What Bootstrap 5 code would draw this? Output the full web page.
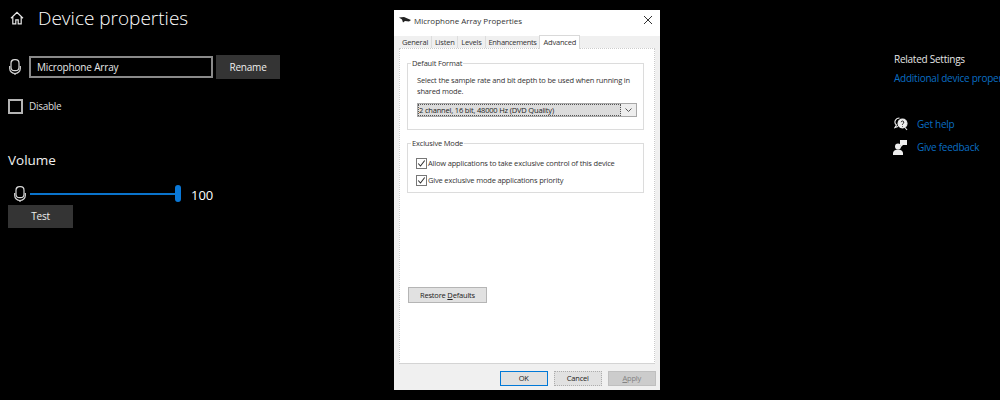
<!DOCTYPE html>
<html lang="en"><head><meta charset="utf-8"><title>Device properties</title>
<link href="https://cdn.jsdelivr.net/npm/bootstrap@5.3.0/dist/css/bootstrap.min.css" rel="stylesheet">
<style>
html,body{height:400px;overflow:hidden}
body{background:#000;color:#fff;font-family:"Open Sans","Noto Sans",sans-serif;font-size:10px;width:1000px}
.pane-left{width:394px;height:400px;flex:none;padding-left:8px}
.pane-right{width:340px;flex:none;padding:52px 0 0 234px;white-space:nowrap;overflow:hidden;height:400px}
.title-row{height:34px;padding-top:2px;gap:14px;padding-left:2px}
.title-row h1{font-size:19px;font-weight:300;line-height:28px;margin:0}
.name-row{margin-top:21px;height:24px;gap:3px;padding-left:1px}
.name-input{width:184px;height:22px;margin-left:5px;border:2px solid #8a8a8a;background:#000;color:#e8e8e8;font-size:10px;letter-spacing:-.17px;padding:0 6px;line-height:18px;border-radius:0}
.dark-btn{background:#343434;color:#eee;font-size:10px;letter-spacing:-.2px;border:0;border-radius:0;padding:0;display:flex;align-items:center;justify-content:center}
.rename{width:64px;height:24px}
.dis-row{margin-top:20px;height:15px;gap:6px;font-size:10px;letter-spacing:-.3px;color:#ddd}
.box{width:15px;height:15px;border:2px solid #b4b4b4;flex:none}
.vol-h{font-size:13.5px;font-weight:400;margin:36px 0 0;line-height:20px;color:#f0f0f0}
.vol-row{margin-top:15px;height:17px;padding-left:6px;position:relative}
.track{width:147px;height:2px;background:#0a74cc;margin-left:4px;position:relative}
.thumb{position:absolute;right:-4px;top:-8px;width:6px;height:17px;border-radius:3px;background:#0a78d7}
.vol-num{font-size:13px;margin-left:14px;margin-top:4px;line-height:17px}
.test{width:65px;height:23px;margin-top:3px}
.dlg{width:266px;height:380px;flex:none;margin-top:10px;background:#f0f0f0;color:#222;font-size:7.5px;letter-spacing:-.18px;line-height:11px;display:flex;flex-direction:column}
.dlg-top{height:26px;flex:none;background:#fff;padding:0 7px 6px 5px;font-size:8px;letter-spacing:0;gap:3px}
.dlg-top .ttl{flex:1;color:#333}
.tabstrip{background:#f0f0f0;height:12px;flex:none;padding-left:5px;margin-top:0;gap:0;align-items:flex-end;position:relative}
.tb{padding:0 2.9px;height:12px;line-height:13px;color:#333;border-right:1px solid #ddd;white-space:nowrap;letter-spacing:-.2px}
.tb.wide{letter-spacing:-.32px}
.tb.on{background:#fff;border:1px solid #d9d9d9;border-bottom:0;height:14px;padding:0 3px;line-height:12px;margin-bottom:-1px;margin-left:-1px;position:relative;z-index:2}
.panel{margin:0 5px;height:316px;flex:none;background:#fff;border:1px dotted #ccc;border-bottom:1px solid #d4d4d4;padding:14px 10px 0 7px}
.grp{position:relative;border:1px solid #dcdcdc;padding:0 6px 0 9px}
.grp-l{position:absolute;top:-6px;left:3px;background:#fff;padding:0 1px;color:#333;line-height:11px}
.g1{height:67px;padding-top:11px}
.g2{height:50px;margin-top:13px;padding-top:14px}
.g1 p{margin:0;line-height:10.5px;color:#333}
.sel{margin-top:7px;height:14px;width:220px;margin-left:0;background:#e3e3e3;border:1px solid #a8a8a8;display:flex}
.sel-t{flex:1;outline:1px dotted #555;outline-offset:-1px;background:#dcdcdc;padding-left:1px;line-height:12px;color:#222}
.sel-a{width:15px;background:#eee;display:flex;align-items:center;justify-content:center}
.ck{gap:1px;height:11px;margin-bottom:6px;margin-left:-1px;color:#333;white-space:nowrap}
.cb{width:11px;height:11px;border:1px solid #777;background:#fff;flex:none;display:flex}
.restore{width:79px;height:16px;margin-top:94px;margin-left:1px;background:#e1e1e1;border:1px solid #b5b5b5;font-size:7.5px;letter-spacing:-.18px;line-height:13px;padding:0;color:#222;display:block;border-radius:0}
.foot{height:26px;flex:none;padding:7px 4px 0 0;gap:5.5px;justify-content:flex-end}
.wb{width:48.5px;height:14.5px;font-size:7.5px;letter-spacing:-.18px;line-height:11px;padding:0;border-radius:0;background:#e1e1e1;border:1px solid #adadad;color:#222}
.wb.def{border:1.5px solid #0078d7}
.wb.cancel{border-style:dotted}
.wb.dim{background:#ccc;color:#838383;border-color:#bfbfbf}
.rel-h{font-size:10px;letter-spacing:-.25px;color:#e6e6e6;line-height:14px}
.rel-a{font-size:10px;letter-spacing:-.25px;color:#0a6ec4;line-height:14px;margin-top:5px;text-decoration:none;display:block}
.hlp{gap:9px;height:16px;font-size:10px;letter-spacing:-.25px;color:#0a6ec4}
.hlp.first{margin-top:31px}
.hlp.second{margin-top:7px;margin-left:-1px;gap:10px}
</style></head><body class="d-flex">
<div class="pane-left">
 <div class="title-row d-flex align-items-center">
  <svg width="14" height="14" viewBox="0 0 14 14" fill="none" stroke="#e8e8e8" stroke-width="1.2"><path d="M1 7.200 7 1.300l6 5.900M2.800 5.800v7h3v-4h2.400v4h3v-7"/></svg>
  <h1>Device properties</h1>
 </div>
 <div class="name-row d-flex align-items-center">
  <svg width="12" height="16" viewBox="0 0 12 16" fill="none" stroke="#d8d8d8" stroke-width="1.200"><rect x="2" y=".7" width="8" height="11" rx="3.500"/><path d="M.7 7v2.500a5.300 5 0 0 0 10.600 0V7M6 14.500v1.500"/></svg>
  <div class="name-input">Microphone Array</div>
  <button class="dark-btn rename" type="button">Rename</button>
 </div>
 <div class="dis-row d-flex align-items-center"><span class="box"></span><span>Disable</span></div>
 <h2 class="vol-h">Volume</h2>
 <div class="vol-row d-flex align-items-center">
  <svg width="12" height="16" viewBox="0 0 12 16" fill="none" stroke="#d8d8d8" stroke-width="1.200"><rect x="2" y=".7" width="8" height="11" rx="3.500"/><path d="M.7 7v2.500a5.300 5 0 0 0 10.600 0V7M6 14.500v1.500"/></svg>
  <div class="track"><span class="thumb"></span></div>
  <span class="vol-num">100</span>
 </div>
 <button class="dark-btn test" type="button">Test</button>
</div>
<div class="dlg">
 <div class="dlg-top d-flex align-items-center">
  <svg width="12" height="8" viewBox="0 0 12 8"><path d="M0 1.500 5 1l7 3-2 1.500-4-.5-2 1.500-1-3z" fill="#222"/></svg>
  <span class="ttl">Microphone Array Properties</span>
  <svg width="10" height="10" viewBox="0 0 10 10" stroke="#333" stroke-width="1"><path d="M1 1l8 8M9 1 1 9"/></svg>
 </div>
 <div class="tabstrip d-flex">
  <span class="tb">General</span><span class="tb">Listen</span><span class="tb">Levels</span><span class="tb wide">Enhancements</span><span class="tb on">Advanced</span>
 </div>
 <div class="panel">
  <div class="grp g1"><span class="grp-l">Default Format</span>
   <p>Select the sample rate and bit depth to be used when running in shared mode.</p>
   <div class="sel"><span class="sel-t">2 channel, 16 bit, 48000 Hz (DVD Quality)</span><span class="sel-a"><svg width="7" height="4" viewBox="0 0 7 4" fill="none" stroke="#555"><path d="M.5.5 3.500 3.500 6.500.5"/></svg></span></div>
  </div>
  <div class="grp g2"><span class="grp-l">Exclusive Mode</span>
   <div class="ck d-flex align-items-center"><span class="cb"><svg width="9" height="9" viewBox="0 0 9 9" fill="none" stroke="#333" stroke-width="1.100"><path d="M1.200 4.500 3.500 7l4.200-5.500"/></svg></span>Allow applications to take exclusive control of this device</div>
   <div class="ck d-flex align-items-center"><span class="cb"><svg width="9" height="9" viewBox="0 0 9 9" fill="none" stroke="#333" stroke-width="1.100"><path d="M1.200 4.500 3.500 7l4.200-5.500"/></svg></span>Give exclusive mode applications priority</div>
  </div>
  <button class="restore" type="button">Restore <u>D</u>efaults</button>
 </div>
 <div class="foot d-flex">
  <button class="wb def" type="button">OK</button>
  <button class="wb cancel" type="button">Cancel</button>
  <button class="wb dim" type="button"><u>A</u>pply</button>
 </div>
</div>
<div class="pane-right">
 <div class="rel-h">Related Settings</div>
 <a class="rel-a" href="#">Additional device properties</a>
 <div class="hlp first d-flex align-items-center">
  <svg width="14" height="14" viewBox="0 0 14 14" fill="none" stroke="#eee" stroke-width="1.100"><path d="M5.500 1a4.500 4 0 0 0-3 7L1 10.500l3-1"/><circle cx="8.500" cy="6.500" r="4.500" fill="#eee"/><path d="M11 10.500l2 2.500"/><path d="M7.200 5.200a1.300 1.300 0 1 1 1.800 1.300L8.500 7.300v.7M8.500 9v.6" stroke="#111" stroke-width=".9"/></svg>
  <span>Get help</span></div>
 <div class="hlp second d-flex align-items-center">
  <svg width="14" height="15" viewBox="0 0 14 15" fill="#eee"><path d="M7 0h7v5H10L8 7V5H7z"/><circle cx="5" cy="6.500" r="3"/><path d="M0 15v-2a5 3.500 0 0 1 10 0v2z"/></svg>
  <span>Give feedback</span></div>
</div>
</body></html>
